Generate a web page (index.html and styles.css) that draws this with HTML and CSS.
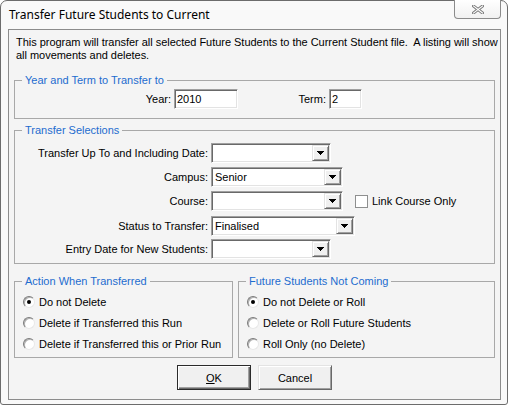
FILE: index.html
```html
<!DOCTYPE html>
<html>
<head>
<meta charset="utf-8">
<link rel="stylesheet" href="styles.css">
</head>
<body>
<div class="window">
  <div class="titlebar">
    <span class="title">Transfer Future Students to Current</span>
    <div class="close">
      <svg width="12" height="9" viewBox="0 0 12 9">
        <path d="M1.5 1 L10.5 8 M10.5 1 L1.5 8" stroke="#7a7a7a" stroke-width="3" stroke-linecap="square"/>
        <path d="M1.5 1 L10.5 8 M10.5 1 L1.5 8" stroke="#ffffff" stroke-width="1.1" stroke-linecap="square"/>
      </svg>
    </div>
  </div>
  <div class="client">
    <p class="intro">This program will transfer all selected Future Students to the Current Student file.&nbsp; A listing will show<br>all movements and deletes.</p>

    <fieldset class="group g-year">
      <legend>Year and Term to Transfer to</legend>
      <div class="year-row">
        <span class="lbl lbl-year">Year:</span>
        <div class="edit w-year">2010</div>
        <span class="lbl lbl-term">Term:</span>
        <div class="edit w-term">2</div>
      </div>
    </fieldset>

    <fieldset class="group g-sel">
      <legend>Transfer Selections</legend>
      <div class="sel-grid">
        <span class="lbl">Transfer Up To and Including Date:</span>
        <div class="ctl"><div class="combo w120"><span class="val"></span><span class="dd"><svg width="7" height="4" viewBox="0 0 7 4" shape-rendering="crispEdges"><rect x="0" y="0" width="7" height="1"/><rect x="1" y="1" width="5" height="1"/><rect x="2" y="2" width="3" height="1"/><rect x="3" y="3" width="1" height="1"/></svg></span></div></div>

        <span class="lbl">Campus:</span>
        <div class="ctl"><div class="combo w132"><span class="val">Senior</span><span class="dd"><svg width="7" height="4" viewBox="0 0 7 4" shape-rendering="crispEdges"><rect x="0" y="0" width="7" height="1"/><rect x="1" y="1" width="5" height="1"/><rect x="2" y="2" width="3" height="1"/><rect x="3" y="3" width="1" height="1"/></svg></span></div></div>

        <span class="lbl">Course:</span>
        <div class="ctl"><div class="combo w132"><span class="val"></span><span class="dd"><svg width="7" height="4" viewBox="0 0 7 4" shape-rendering="crispEdges"><rect x="0" y="0" width="7" height="1"/><rect x="1" y="1" width="5" height="1"/><rect x="2" y="2" width="3" height="1"/><rect x="3" y="3" width="1" height="1"/></svg></span></div>
          <span class="check"></span><span class="check-lbl">Link Course Only</span></div>

        <span class="lbl r-status">Status to Transfer:</span>
        <div class="ctl r-status"><div class="combo w144"><span class="val">Finalised</span><span class="dd"><svg width="7" height="4" viewBox="0 0 7 4" shape-rendering="crispEdges"><rect x="0" y="0" width="7" height="1"/><rect x="1" y="1" width="5" height="1"/><rect x="2" y="2" width="3" height="1"/><rect x="3" y="3" width="1" height="1"/></svg></span></div></div>

        <span class="lbl">Entry Date for New Students:</span>
        <div class="ctl"><div class="combo w120"><span class="val"></span><span class="dd"><svg width="7" height="4" viewBox="0 0 7 4" shape-rendering="crispEdges"><rect x="0" y="0" width="7" height="1"/><rect x="1" y="1" width="5" height="1"/><rect x="2" y="2" width="3" height="1"/><rect x="3" y="3" width="1" height="1"/></svg></span></div></div>
      </div>
    </fieldset>

    <div class="bottom-groups">
      <fieldset class="group g-action">
        <legend>Action When Transferred</legend>
        <div class="radio-row"><span class="radio checked"></span><span class="radio-lbl">Do not Delete</span></div>
        <div class="radio-row"><span class="radio"></span><span class="radio-lbl">Delete if Transferred this Run</span></div>
        <div class="radio-row"><span class="radio"></span><span class="radio-lbl">Delete if Transferred this or Prior Run</span></div>
      </fieldset>
      <fieldset class="group g-future">
        <legend>Future Students Not Coming</legend>
        <div class="radio-row"><span class="radio checked"></span><span class="radio-lbl">Do not Delete or Roll</span></div>
        <div class="radio-row"><span class="radio"></span><span class="radio-lbl">Delete or Roll Future Students</span></div>
        <div class="radio-row"><span class="radio"></span><span class="radio-lbl">Roll Only (no Delete)</span></div>
      </fieldset>
    </div>

    <div class="buttons">
      <button class="btn btn-default"><u>O</u>K</button>
      <button class="btn">Cancel</button>
    </div>
  </div>
</div>
</body>
</html>
```

FILE: styles.css
```css
html, body {
  margin: 0;
  padding: 0;
  background: #ffffff;
}

body {
  font-family: "Liberation Sans", Arial, sans-serif;
  font-size: 11px;
  color: #000;
}

.window {
  width: 508px;
  height: 405px;
  box-sizing: border-box;
  border: 1px solid #6c6c6c;
  border-radius: 7px 7px 3px 3px;
  background: #f9f9f9;
  display: flex;
  flex-direction: column;
}

.titlebar {
  height: 28px;
  display: flex;
  align-items: flex-start;
}

.title {
  padding: 6px 0 0 8px;
  font-family: "Noto Sans", "Liberation Sans", sans-serif;
  font-size: 12px;
  line-height: 16px;
  color: #000;
}

.close {
  margin-left: auto;
  margin-right: 6px;
  margin-top: -1px;
  width: 47px;
  height: 19px;
  box-sizing: border-box;
  border: 1px solid #8b8b8b;
  border-top: none;
  border-radius: 0 0 4px 4px;
  background: linear-gradient(#ffffff, #f1f1f1);
  display: flex;
  align-items: center;
  justify-content: center;
}

.client {
  margin-left: 7px;
  width: 493px;
  height: 371px;
  box-sizing: border-box;
  border: 1px solid #8c8c8c;
  background: #f4f4f4;
  display: flex;
  flex-direction: column;
}

.intro {
  margin: 0;
  padding: 6px 7px 0 7px;
  line-height: 13px;
  white-space: nowrap;
  letter-spacing: -0.03px;
}

.group {
  margin: 0 5px;
  border: 1px solid #a8a8a8;
  min-width: 0;
  padding: 0;
}

.group legend {
  margin-left: 7px;
  padding: 0 3px;
  color: #1e6ccf;
  line-height: 13px;
}

.g-year {
  margin-top: 12px;
  padding: 2px 0 9px 0;
}

.year-row {
  display: flex;
  align-items: center;
  height: 20px;
}

.lbl {
  text-align: right;
  white-space: nowrap;
}

.lbl-year {
  width: 156px;
  margin-right: 3px;
}

.lbl-term {
  width: 88px;
  margin-right: 3px;
}

.edit {
  height: 20px;
  box-sizing: border-box;
  background: #fff;
  border-top: 1px solid #a0a0a0;
  border-left: 1px solid #a0a0a0;
  border-right: 1px solid #ffffff;
  border-bottom: 1px solid #ffffff;
  box-shadow: inset 1px 1px #696969, inset -1px -1px #e3e3e3;
  padding: 0 2px;
  display: flex;
  align-items: center;
}

.w-year { width: 64px; }
.w-term { width: 33px; }

.g-sel {
  margin-top: 5px;
  padding: 6px 0 4px 0;
}

.sel-grid {
  display: grid;
  grid-template-columns: 193px auto;
  column-gap: 3px;
  row-gap: 4px;
  grid-auto-rows: 20px;
  align-items: center;
}

.r-status {
  margin-top: 2px;
}

.ctl {
  display: flex;
  align-items: center;
  height: 20px;
}

.combo {
  height: 20px;
  box-sizing: border-box;
  background: #fff;
  border-top: 1px solid #a0a0a0;
  border-left: 1px solid #a0a0a0;
  border-right: 1px solid #ffffff;
  border-bottom: 1px solid #ffffff;
  box-shadow: inset 1px 1px #696969, inset -1px -1px #e3e3e3;
  padding: 1px;
  display: flex;
  align-items: center;
}

.w120 { width: 120px; }
.w132 { width: 132px; }
.w144 { width: 144px; }

.val {
  flex: 1;
  padding-left: 2px;
  white-space: nowrap;
}

.dd {
  width: 17px;
  height: 16px;
  box-sizing: border-box;
  background: #f0f0f0;
  border-top: 1px solid #e3e3e3;
  border-left: 1px solid #e3e3e3;
  border-right: 1px solid #696969;
  border-bottom: 1px solid #696969;
  box-shadow: inset 1px 1px #ffffff, inset -1px -1px #a0a0a0;
  display: flex;
  align-items: center;
  justify-content: center;
}

.dd svg {
  fill: #000;
}

.check {
  margin-left: 12px;
  width: 13px;
  height: 13px;
  box-sizing: border-box;
  border: 1px solid #8e8f8f;
  background: #fff;
}

.check-lbl {
  margin-left: 4px;
  white-space: nowrap;
}

.bottom-groups {
  margin: 11px 5px 0 5px;
  display: flex;
  gap: 5px;
}

.bottom-groups .group {
  margin: 0;
  padding: 3px 0 3px 0;
}

.g-action { width: 219px; box-sizing: border-box; }
.g-future { width: 257px; box-sizing: border-box; }

.radio-row {
  display: flex;
  align-items: center;
  height: 21px;
  padding-left: 8px;
}

.radio {
  width: 12px;
  height: 12px;
  box-sizing: border-box;
  border-radius: 50%;
  border-top: 1px solid #7a7a7a;
  border-left: 1px solid #7a7a7a;
  border-right: 1px solid #e8e8e8;
  border-bottom: 1px solid #e8e8e8;
  background: #fff;
  box-shadow: inset 1px 1px #b0b0b0;
  display: flex;
  align-items: center;
  justify-content: center;
}

.radio.checked::after {
  content: "";
  width: 4px;
  height: 4px;
  border-radius: 50%;
  background: #000;
}

.radio-lbl {
  margin-left: 4px;
  white-space: nowrap;
}

.buttons {
  margin-top: 7px;
  display: flex;
  justify-content: center;
  gap: 7px;
}

.btn {
  width: 74px;
  height: 25px;
  box-sizing: border-box;
  font-family: "Liberation Sans", Arial, sans-serif;
  font-size: 11px;
  color: #000;
  background: #f0f0f0;
  padding: 0;
  border-top: 1px solid #e3e3e3;
  border-left: 1px solid #e3e3e3;
  border-right: 1px solid #696969;
  border-bottom: 1px solid #696969;
  box-shadow: inset 1px 1px #ffffff, inset -1px -1px #a0a0a0;
}

.btn-default {
  border: 1px solid #2b2b2b;
  box-shadow: inset 1px 1px #ffffff, inset -1px -1px #696969, inset -2px -2px #a0a0a0;
}
```
